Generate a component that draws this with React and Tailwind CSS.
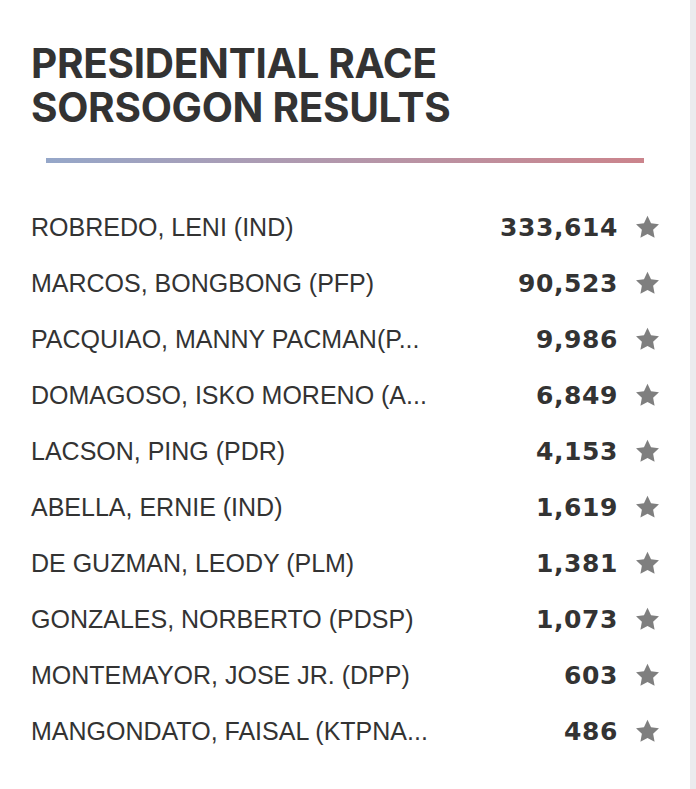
import React from "react";

const rows = [
  ["ROBREDO, LENI (IND)", "333,614"],
  ["MARCOS, BONGBONG (PFP)", "90,523"],
  ["PACQUIAO, MANNY PACMAN(P...", "9,986"],
  ["DOMAGOSO, ISKO MORENO (A...", "6,849"],
  ["LACSON, PING (PDR)", "4,153"],
  ["ABELLA, ERNIE (IND)", "1,619"],
  ["DE GUZMAN, LEODY (PLM)", "1,381"],
  ["GONZALES, NORBERTO (PDSP)", "1,073"],
  ["MONTEMAYOR, JOSE JR. (DPP)", "603"],
  ["MANGONDATO, FAISAL (KTPNA...", "486"],
];

function Star() {
  return (
    <svg width="25" height="24" viewBox="0 0 24 23" className="shrink-0">
      <path
        d="M12 0.8l3.4 7 7.6 1-5.6 5.3 1.4 7.6L12 18.1l-6.8 3.6 1.4-7.6L1 8.8l7.6-1z"
        fill="#7f7f7f"
      />
    </svg>
  );
}

export default function App() {
  return (
    <div className="w-[696px] h-[789px] flex bg-white overflow-hidden">
      <div className="flex-1 flex flex-col pl-[31px] pr-[30px] pt-[42px]">
        <h1
          className="flex flex-col text-[#333333] font-bold text-[40.5px] leading-[44px] tracking-[-0.3px]"
          style={{ fontFamily: "Inter, 'Liberation Sans', sans-serif" }}
        >
          <span>PRESIDENTIAL RACE</span>
          <span>SORSOGON RESULTS</span>
        </h1>
        <div className="ml-[15px] mr-[16px] mt-[28px] h-[5px] bg-gradient-to-r from-[#95a7c9] to-[#cb848c]" />
        <div className="mt-[36px] flex flex-col">
          {rows.map(([name, votes]) => (
            <div key={name} className="h-[56px] flex items-center">
              <div
                className="flex-1 text-[#333333] text-[25px] leading-none"
                style={{ fontFamily: "'Liberation Sans', Arial, sans-serif" }}
              >
                {name}
              </div>
              <div
                className="text-[#333333] font-bold text-[25px] leading-none tracking-[0.6px] mr-[17px]"
                style={{ fontFamily: "'DejaVu Sans', sans-serif" }}
              >
                {votes}
              </div>
              <Star />
            </div>
          ))}
        </div>
      </div>
      <div className="w-[6px] bg-[#ebebee]" />
    </div>
  );
}
